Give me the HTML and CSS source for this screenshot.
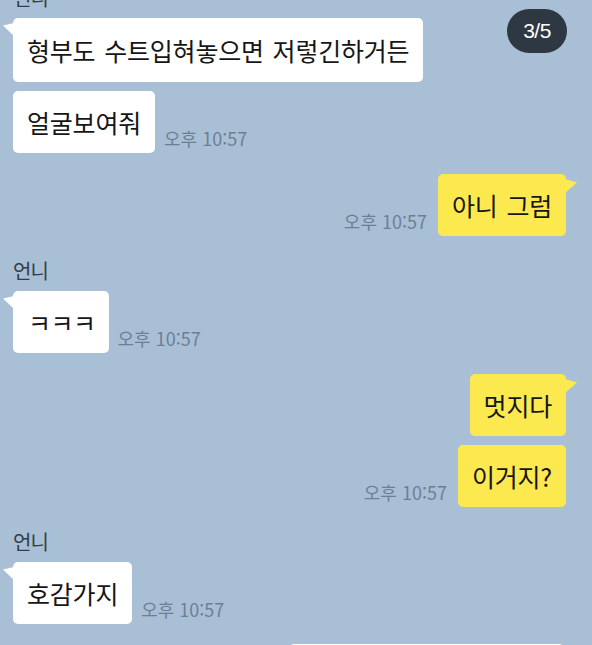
FILE: index.html
```html
<!DOCTYPE html>
<html lang="ko">
<head>
<meta charset="utf-8">
<title>채팅</title>
<link rel="stylesheet" href="styles.css">
</head>
<body>
<div class="chat">
  <div class="group in">
    <div class="name">언니</div>
    <div class="row">
      <div class="bubble white first tail">형부도 수트입혀놓으면 저렇긴하거든</div>
    </div>
    <div class="row">
      <div class="bubble white">얼굴보여줘</div>
      <div class="time">오후 10:57</div>
    </div>
  </div>

  <div class="group out">
    <div class="row">
      <div class="time">오후 10:57</div>
      <div class="bubble yellow tail">아니 그럼</div>
    </div>
  </div>

  <div class="group in">
    <div class="name">언니</div>
    <div class="row">
      <div class="bubble white tail kk">ㅋㅋㅋ</div>
      <div class="time">오후 10:57</div>
    </div>
  </div>

  <div class="group out">
    <div class="row">
      <div class="bubble yellow tail">멋지다</div>
    </div>
    <div class="row">
      <div class="time">오후 10:57</div>
      <div class="bubble yellow">이거지?</div>
    </div>
  </div>

  <div class="group in">
    <div class="name">언니</div>
    <div class="row">
      <div class="bubble white tail">호감가지</div>
      <div class="time">오후 10:57</div>
    </div>
  </div>

  <div class="group out last">
    <div class="row">
      <div class="bubble white wide"></div>
    </div>
  </div>
</div>
<div class="badge">3/5</div>
</body>
</html>
```

FILE: styles.css
```css
html, body {
  margin: 0;
  padding: 0;
}
body {
  width: 592px;
  height: 645px;
  overflow: hidden;
  background: #a9bfd6;
  font-family: "Noto Sans CJK KR", "Noto Sans", sans-serif;
  position: relative;
}
.chat {
  display: flex;
  flex-direction: column;
  padding: 0 26px 0 13px;
  margin-top: -14px;
}
.group {
  display: flex;
  flex-direction: column;
  gap: 9px;
}
.group.out {
  align-items: flex-end;
  margin-top: 21px;
}
.group.in {
  align-items: flex-start;
  margin-top: 23px;
}
.group.in:first-child {
  margin-top: 0;
}
.group.last {
  margin-top: 20px;
  margin-right: 2px;
}
.name {
  font-size: 20px;
  line-height: 24px;
  height: 24px;
  letter-spacing: -0.8px;
  color: #333d48;
  margin-bottom: -1px;
}
.row {
  display: flex;
  align-items: flex-end;
  gap: 9px;
}
.out .row {
  gap: 11px;
}
.bubble {
  position: relative;
  font-size: 25px;
  line-height: 30px;
  letter-spacing: -0.2px;
  word-spacing: 2px;
  color: #161616;
  padding: 16px 14px;
  border-radius: 5px;
  white-space: nowrap;
}
.bubble.first {
  padding-top: 17px;
  padding-bottom: 17px;
}
.bubble.white {
  background: #ffffff;
}
.bubble.yellow {
  background: #fce94f;
}
.bubble.kk {
  padding-left: 15px;
  padding-right: 13px;
  letter-spacing: -0.5px;
}
.bubble.wide {
  width: 275px;
  height: 60px;
  padding: 0;
}
.in .bubble.tail::before {
  content: "";
  position: absolute;
  left: -10px;
  top: 5px;
  width: 11px;
  height: 13px;
  background: #ffffff;
  clip-path: polygon(0 20%, 100% 0, 100% 100%);
}
.out .bubble.tail::after {
  content: "";
  position: absolute;
  right: -11px;
  top: 5px;
  width: 12px;
  height: 14px;
  background: #fce94f;
  clip-path: polygon(0 0, 100% 25%, 0 100%);
}
.time {
  font-size: 18px;
  line-height: 20px;
  color: #6e7f91;
  margin-bottom: 5px;
  white-space: nowrap;
}
.badge {
  position: absolute;
  left: 507px;
  top: 9px;
  width: 60px;
  height: 44px;
  border-radius: 22px;
  background: #2e3842;
  color: #ffffff;
  font-family: "Liberation Sans", "Noto Sans", sans-serif;
  font-size: 21px;
  line-height: 44px;
  text-align: center;
  letter-spacing: -0.5px;
}
```
